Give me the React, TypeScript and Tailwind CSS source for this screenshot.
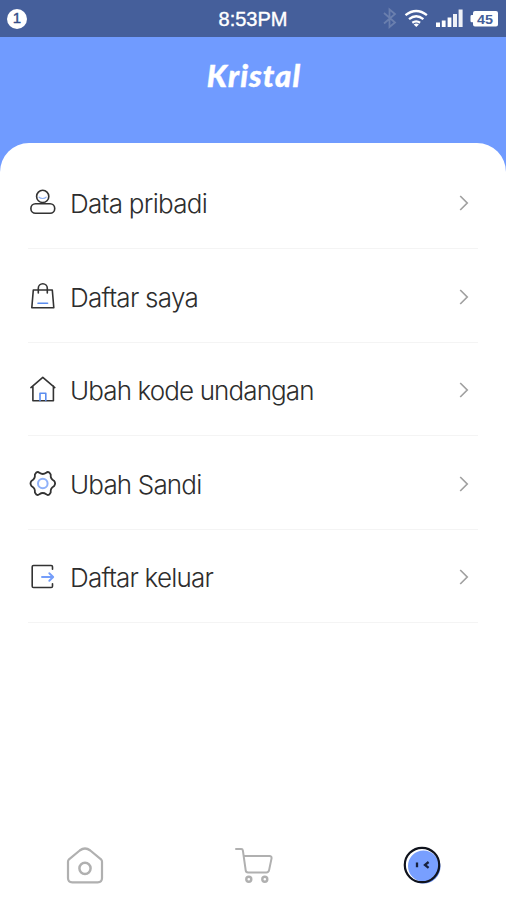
import type { ReactNode } from "react";

const ink = "#333333";
const blue = "#5b8def";

function Icon({ children }: { children: ReactNode }) {
  return (
    <svg width="30" height="30" viewBox="0 0 30 30" fill="none" stroke={ink} strokeWidth="1.6" strokeLinecap="round" strokeLinejoin="round">
      {children}
    </svg>
  );
}

const UserIcon = () => (
  <Icon>
    <circle cx="14.7" cy="8.4" r="6.1" />
    <rect x="2.9" y="15.7" width="23.8" height="9.6" rx="4.6" fill="#fff" />
    <path d="M11 9.2c1.4 1.8 5.8 1.8 7.2 0" stroke={blue} strokeWidth="1.1" opacity=".7" />
  </Icon>
);

const BagIcon = () => (
  <Icon>
    <path d="M5.3 8h19l1.5 17.8h-22z" />
    <path d="M10.3 11V6.3a4.5 4.5 0 0 1 9 0V11" />
    <path d="M10 21.2h9.6" stroke={blue} />
  </Icon>
);

const HouseIcon = () => (
  <Icon>
    <path d="M2.9 12.6 14.8 2.4l12 10.2M4.9 11v14.8h20.5V11" />
    <path d="M12 25.5v-7.3h5.8v7.3" stroke={blue} />
  </Icon>
);

const GearIcon = () => (
  <Icon>
    <path d="M8.3 3.5Q10 2.3 11.4 3.8Q14.8 6.2 18.2 3.8Q19.6 2.3 21.3 3.5L22.7 5.6Q22.3 9.8 25.9 11.7Q28.3 14.5 25.9 17.3Q22.3 19.2 22.7 23.4L21.3 25.5Q19.6 26.7 18.2 25.2Q14.8 22.8 11.4 25.2Q10 26.7 8.3 25.5L6.9 23.4Q7.3 19.2 3.7 17.3Q1.3 14.5 3.7 11.7Q7.3 9.8 6.9 5.6Z" strokeWidth="1.8" />
    <circle cx="14.8" cy="14.5" r="4.8" stroke="#8fb1f9" strokeWidth="2" />
  </Icon>
);

const ExitIcon = () => (
  <Icon>
    <path d="M24.5 7.3V4.8q0-1.3-1.3-1.3H5.5q-1.3 0-1.3 1.3v19.4q0 1.3 1.3 1.3h17.7q1.3 0 1.3-1.3v-2.5" />
    <path d="M14 15h11M21.3 11.2l3.9 3.8-3.9 3.8" stroke="#759efa" strokeWidth="1.9" />
  </Icon>
);

const rows = [
  { label: "Data pribadi", icon: <UserIcon />, size: "h-[93px]", track: "tracking-[-0.73px]" },
  { label: "Daftar saya", icon: <BagIcon />, size: "h-[94px]", track: "tracking-[-0.73px]" },
  { label: "Ubah kode undangan", icon: <HouseIcon />, size: "h-[93px]", track: "tracking-[-0.89px]" },
  { label: "Ubah Sandi", icon: <GearIcon />, size: "h-[94px]", track: "tracking-[-0.83px]" },
  { label: "Daftar keluar", icon: <ExitIcon />, size: "h-[93px]", track: "tracking-[-0.8px]" },
];

function StatusBar() {
  return (
    <div className="grid h-[37px] grid-cols-3 items-center bg-[#455f9b] text-white">
      <div className="ml-[7px] flex h-5 w-5 items-center justify-center rounded-full bg-white font-['Liberation_Sans',sans-serif] text-[15px] text-[#344d88] [-webkit-text-stroke:0.4px_#344d88]">1</div>
      <div className="pt-px text-center font-['Liberation_Sans',sans-serif] text-[20px] whitespace-nowrap [-webkit-text-stroke:0.4px_white]">8:53PM</div>
      <svg className="justify-self-end" width="136" height="37" viewBox="0 0 136 37" fill="none">
        <path d="m14 13 11 9.5-5.5 4.5V9.5l5.5 4.5-11 9.5" stroke="#6a7fae" strokeWidth="1.8" />
        <g stroke="#fff" strokeWidth="2.3">
          <path d="M35.5 15.2q10.7-8.4 21.4 0M39 19.2q7.2-5.8 14.4 0M42.3 22.8q3.9-2.8 7.8 0" />
        </g>
        <path d="M43.7 24.5q2.6-1.8 5.2 0L46.3 27z" fill="#fff" />
        <path d="M66 22.5h4V27h-4zM71.8 20.5h3.8V27h-3.8zM77.6 17.5h3.8V27h-3.8z" fill="#fff" />
        <path d="M83 14h4v13h-4zM88.6 9.5h4V27h-4z" fill="#eef1f7" />
        <path d="M105 11h21q2 0 2 2v11.5q0 2-2 2h-21q-2 0-2-2v-2.3h-1.2q-1.3 0-1.3-1.3v-4.5q0-1.3 1.3-1.3h1.2V13q0-2 2-2z" fill="#fff" />
        <text x="115" y="23.5" textAnchor="middle" className="fill-[#455f9b] font-['Liberation_Sans',sans-serif] text-[13px] font-bold" textLength="16" lengthAdjust="spacingAndGlyphs">45</text>
      </svg>
    </div>
  );
}

export default function App() {
  return (
    <div className="flex h-[900px] w-[506px] flex-col overflow-hidden bg-[#709bff]">
      <StatusBar />
      <header className="flex h-[106px] justify-center pt-[19px]">
        <h1 className="pl-0.5 font-['Lato',sans-serif] text-[31px] leading-[38px] font-black tracking-[1.1px] text-white italic [-webkit-text-stroke:0.4px_white]">Kristal</h1>
      </header>
      <main className="flex flex-1 flex-col rounded-t-[29px] bg-white pt-[13px]">
        <ul className="mx-7">
          {rows.map((row) => (
            <li key={row.label} className={`flex items-center border-b border-[#f4f4f4] pt-0.5 ${row.size}`}>
              <span className="flex w-[42px] shrink-0">{row.icon}</span>
              <span className={`flex-1 pt-0.5 font-['Inter',sans-serif] text-[26px] leading-8 font-light text-[#2d2d2d] ${row.track}`}>{row.label}</span>
              <svg className="mr-[6px]" width="16" height="20" viewBox="0 0 16 20" fill="none" stroke="#a0a0a0" strokeWidth="1.7">
                <path d="m4.2 3 7 7-7 7" />
              </svg>
            </li>
          ))}
        </ul>
        <nav className="mt-auto grid h-[70px] grid-cols-3 justify-items-center">
          <svg width="44" height="44" viewBox="0 0 44 44" fill="none" stroke="#b0b0b0" strokeWidth="2.2" strokeLinejoin="round" className="mt-[13px] ml-px">
            <path d="m5.7 16.7 11-9.2q5.3-4 10.6 0l11 9.2q.7.7.7 2v16.3q0 4.3-4.3 4.3H9.3Q5 39.3 5 35V18.7q0-1.3.7-2z" />
            <circle cx="22" cy="25.3" r="5.6" strokeWidth="2.5" />
          </svg>
          <svg width="44" height="44" viewBox="0 0 44 44" fill="none" stroke="#b0b0b0" strokeWidth="2" strokeLinecap="round" strokeLinejoin="round" className="mt-[13px]">
            <path d="M5 6h5.2q1.5 0 1.7 1.6l2.8 19.8q.2 2 2.3 2h18.4q2.3 0 2.7-2.3l2.4-11.5q.4-2.5-2.1-2.5H13.2" />
            <circle cx="17.8" cy="36.3" r="2.5" strokeWidth="2.4" />
            <circle cx="33.8" cy="36.3" r="2.5" strokeWidth="2.4" />
          </svg>
          <svg width="44" height="44" viewBox="0 0 44 44" fill="none" className="mt-[13px]">
            <circle cx="23.5" cy="23.5" r="17" fill="#5880e5" />
            <circle cx="22" cy="22" r="17.2" fill="#fff" />
            <circle cx="23.5" cy="23" r="15.5" fill="#789fff" />
            <circle cx="22" cy="22" r="17.2" stroke="#10131d" strokeWidth="2.2" />
            <path d="M17 19.5v4.8M28.6 19l-3.6 2.9 3.6 2.9" stroke="#17213e" strokeWidth="2.3" />
          </svg>
        </nav>
      </main>
    </div>
  );
}
